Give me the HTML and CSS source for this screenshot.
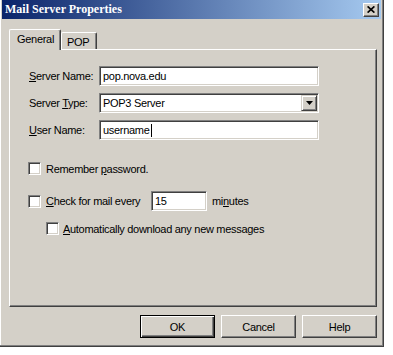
FILE: index.html
```html
<!DOCTYPE html>
<html>
<head>
<meta charset="utf-8">
<title>Mail Server Properties</title>
<link rel="stylesheet" href="styles.css">
</head>
<body>
<div class="window">
  <div class="titlebar">
    <span class="title">Mail Server Properties</span>
    <span class="close"><svg width="8" height="7" viewBox="0 0 8 7"><path d="M0.6 0.4 L7.4 6.6 M7.4 0.4 L0.6 6.6" stroke="#000" stroke-width="1.7" fill="none"/></svg></span>
  </div>
  <div class="tabs">
    <div class="tab active">General</div>
    <div class="tab">POP</div>
  </div>
  <div class="panel">
    <div class="fields">
      <span class="lbl"><u>S</u>erver Name:</span>
      <div class="field text">pop.nova.edu</div>
      <span class="lbl">Server <u>T</u>ype:</span>
      <div class="field select"><span>POP3 Server</span><span class="arrow"><svg width="7" height="4" viewBox="0 0 7 4"><path d="M0 0h7L3.5 4z" fill="#000"/></svg></span></div>
      <span class="lbl"><u>U</u>ser Name:</span>
      <div class="field text">username<span class="caret"></span></div>
    </div>
    <div class="check row-a"><span class="box"></span><span class="ctext">Remember <u>p</u>assword.</span></div>
    <div class="check row-b"><span class="box"></span><span class="ctext every"><u>C</u>heck for mail every</span><div class="field small">15</div><span class="minutes">mi<u>n</u>utes</span></div>
    <div class="check row-c"><span class="box"></span><span class="ctext"><u>A</u>utomatically download any new messages</span></div>
  </div>
  <div class="buttons">
    <div class="btn default">OK</div>
    <div class="btn">Cancel</div>
    <div class="btn">Help</div>
  </div>
</div>
</body>
</html>
```
FILE: styles.css
```css
body {
  margin: 0;
  background: #ffffff;
  font-family: "Liberation Sans", Arial, sans-serif;
  font-size: 11px;
  letter-spacing: -0.3px;
  color: #000;
}
u { text-decoration: underline; text-underline-offset: 1px; }

.window {
  width: 384px;
  height: 347px;
  box-sizing: border-box;
  background: #D4D0C8;
  padding: 0 2px 3px 2px;
  border-right: 1px solid #404040;
  border-bottom: 1px solid #404040;
  box-shadow: inset -1px -1px #808080, inset 1px 0 #ffffff;
  display: flex;
  flex-direction: column;
}

.titlebar {
  height: 19px;
  display: flex;
  align-items: center;
  justify-content: space-between;
  padding: 0 2px 0 3px;
  background: linear-gradient(to right, #0A246A, #A6CAF0);
}
.title {
  font-family: "Liberation Serif", "Times New Roman", serif;
  font-weight: bold;
  font-size: 12px;
  letter-spacing: 0;
  color: #ffffff;
}
.close {
  width: 16px;
  height: 14px;
  box-sizing: border-box;
  background: #D4D0C8;
  border: 1px solid;
  border-color: #ffffff #404040 #404040 #ffffff;
  box-shadow: inset -1px -1px #808080;
  display: flex;
  align-items: center;
  justify-content: center;
  padding: 0 1px 1px 0;
}

.tabs {
  display: flex;
  align-items: flex-end;
  margin: 10px 0 0 7px;
  height: 20px;
}
.tab {
  height: 17px;
  box-sizing: border-box;
  border-top: 1px solid #ffffff;
  border-left: 1px solid #ffffff;
  border-right: 1px solid #404040;
  box-shadow: inset -1px 0 #808080;
  border-radius: 2px 2px 0 0;
  padding: 1px 7px 0 5px;
  display: flex;
  align-items: center;
}
.tab.active {
  position: relative;
  z-index: 1;
  height: 21px;
  margin-bottom: -1px;
  width: 52px;
  padding: 0 0 2px 7px;
  background: #D4D0C8;
}

.panel {
  margin-left: 7px;
  width: 368px;
  height: 258px;
  box-sizing: border-box;
  border: 1px solid;
  border-color: #ffffff #404040 #404040 #ffffff;
  box-shadow: inset -1px -1px #808080;
  padding: 16px 0 0 18px;
}

.fields {
  display: grid;
  grid-template-columns: 71px 220px;
  grid-auto-rows: 20px;
  row-gap: 7px;
  align-items: center;
}
.lbl { padding-left: 1px; }

.field {
  height: 20px;
  box-sizing: border-box;
  background: #ffffff;
  border: 1px solid;
  border-color: #808080 #ffffff #ffffff #808080;
  box-shadow: inset 1px 1px #404040, inset -1px -1px #D4D0C8;
  padding-left: 3px;
  display: flex;
  align-items: center;
}
.caret {
  display: inline-block;
  width: 1px;
  height: 13px;
  background: #000;
  margin-left: 1px;
}
.select {
  justify-content: space-between;
  padding-right: 1px;
}
.arrow {
  width: 16px;
  height: 16px;
  box-sizing: border-box;
  background: #D4D0C8;
  border: 1px solid;
  border-color: #D4D0C8 #404040 #404040 #D4D0C8;
  box-shadow: inset 1px 1px #ffffff, inset -1px -1px #808080;
  display: flex;
  align-items: center;
  justify-content: center;
  padding-bottom: 1px;
}

.check {
  display: flex;
  align-items: center;
}
.box {
  width: 13px;
  height: 13px;
  box-sizing: border-box;
  background: #ffffff;
  border: 1px solid;
  border-color: #808080 #ffffff #ffffff #808080;
  box-shadow: inset 1px 1px #404040, inset -1px -1px #D4D0C8;
  flex: none;
}
.ctext { margin-left: 5px; }
.row-a { margin-top: 22px; height: 13px; }
.row-b { margin-top: 16px; height: 20px; }
.row-c { margin-top: 11px; height: 13px; margin-left: 18px; }
.row-c .ctext { margin-left: 4px; }
.every { width: 105px; }
.small { width: 56px; }
.minutes { margin-left: 5px; }

.buttons {
  display: flex;
  justify-content: flex-end;
  gap: 6px;
  margin: 8px 0 0 7px;
  width: 368px;
}
.btn {
  width: 75px;
  height: 23px;
  box-sizing: border-box;
  border: 1px solid;
  border-color: #ffffff #404040 #404040 #ffffff;
  box-shadow: inset -1px -1px #808080;
  display: flex;
  align-items: center;
  justify-content: center;
}
.btn.default {
  border-color: #000;
  box-shadow: inset 1px 1px #ffffff, inset -1px -1px #404040, inset -2px -2px #808080;
}
```
